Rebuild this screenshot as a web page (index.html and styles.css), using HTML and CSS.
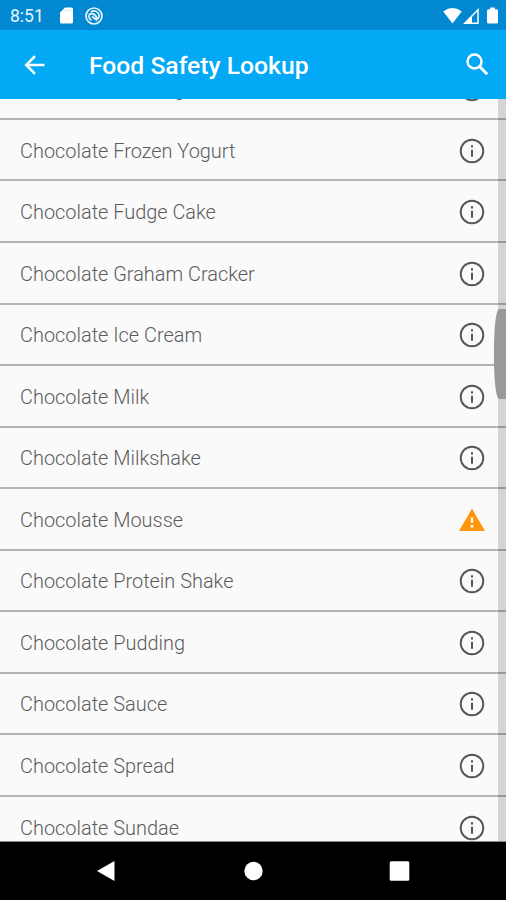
FILE: index.html
```
<!DOCTYPE html>
<html lang="en">
<head>
<meta charset="utf-8">
<title>Food Safety Lookup</title>
<link rel="stylesheet" href="styles.css">
</head>
<body>
<svg class="defs" aria-hidden="true">
  <symbol id="info" viewBox="0 0 26 26">
    <circle cx="13" cy="13" r="11.300" fill="none" stroke="#555" stroke-width="1.900"/>
    <path d="M12 11.700h2v7.100h-2zM12 7.300h2v2.200h-2z" fill="#555"/>
  </symbol>
</svg>
<div class="screen">
  <div class="status">
    <span class="time">8:51</span>
    <svg class="sd" viewBox="0 0 13 17"><path d="M5 0.500h6.500q1.500 0 1.500 1.500v13q0 1.500-1.500 1.500h-10Q0 16.500 0 15V5.500z" fill="#fff"/><path d="M5.300 2.500v2M7.800 2.500v2M10.300 2.500v2" stroke="#b9dcf2" stroke-width="1"/></svg>
    <svg class="sync" viewBox="0 0 18 18" fill="none" stroke="#e4f3fc"><circle cx="9" cy="9" r="8" stroke-width="1.700"/><path d="M6.500 13.300A5 5 0 0 1 4.500 7M6 5A5 5 0 0 1 13 12" stroke-width="1.600"/><path d="M4.500 7.500Q9 4.500 12.500 12M7 9.500l5.500 4" stroke-width="1.900"/></svg>
    <span class="spacer"></span>
    <svg class="wifi" viewBox="0 0 19 16"><path d="M0.300 3.500Q9.500-3.300 18.700 3.500L9.500 15.500z" fill="#fff"/></svg>
    <svg class="signal" viewBox="0 0 16 16"><path d="M1.800 15.200L15 1.800v13.400z" fill="none" stroke="#fff" stroke-width="1.500"/><path d="M1 15.500L9 7.500v8z" fill="#fff"/></svg>
    <svg class="battery" viewBox="0 0 11 17"><path d="M3.200 0.500h4.600v1.700h1.700q1.500 0 1.500 1.500v11.300q0 1.500-1.500 1.500h-8Q0 16.500 0 15V3.700q0-1.500 1.500-1.500h1.700z" fill="#fff"/></svg>
  </div>
  <header class="appbar">
    <svg class="back" viewBox="0 0 22 20" fill="none" stroke="#fff" stroke-width="2.500"><path d="M20.500 10H2.500M11 1.200L2.200 10l8.800 8.800"/></svg>
    <h1>Food Safety Lookup</h1>
    <svg class="search" viewBox="0 0 23 23" fill="none" stroke="#fff"><circle cx="8.500" cy="8.500" r="7" stroke-width="2.500"/><path d="M13.800 13.800l7.400 7.400" stroke-width="3"/></svg>
  </header>
  <main class="content">
    <ul class="list">
      <li><span>Chocolate Frosting</span><svg><use href="#info"/></svg></li>
      <li><span>Chocolate Frozen Yogurt</span><svg><use href="#info"/></svg></li>
      <li><span>Chocolate Fudge Cake</span><svg><use href="#info"/></svg></li>
      <li><span>Chocolate Graham Cracker</span><svg><use href="#info"/></svg></li>
      <li><span>Chocolate Ice Cream</span><svg><use href="#info"/></svg></li>
      <li><span>Chocolate Milk</span><svg><use href="#info"/></svg></li>
      <li><span>Chocolate Milkshake</span><svg><use href="#info"/></svg></li>
      <li><span>Chocolate Mousse</span><svg viewBox="0 0 26 26"><path d="M13 1.500L26 24H0z" fill="#ff980f"/><path d="M11.800 10.500h2.400v5.300h-2.400zM11.800 18h2.400v2.600h-2.400z" fill="#fff"/></svg></li>
      <li><span>Chocolate Protein Shake</span><svg><use href="#info"/></svg></li>
      <li><span>Chocolate Pudding</span><svg><use href="#info"/></svg></li>
      <li><span>Chocolate Sauce</span><svg><use href="#info"/></svg></li>
      <li><span>Chocolate Spread</span><svg><use href="#info"/></svg></li>
      <li><span>Chocolate Sundae</span><svg><use href="#info"/></svg></li>
    </ul>
    <div class="track"></div>
    <div class="thumb"></div>
  </main>
  <nav class="navbar">
    <svg viewBox="0 0 22 22"><path d="M2 11L19.500 1v20z" fill="#fff"/></svg>
    <svg viewBox="0 0 22 22"><circle cx="11.500" cy="11" r="9.200" fill="#fff"/></svg>
    <svg viewBox="0 0 22 22"><rect x="1.700" y="1.200" width="19.600" height="19.600" rx="1.500" fill="#fff"/></svg>
  </nav>
</div>
</body>
</html>
```
FILE: styles.css
```
* { box-sizing: border-box; }
body { margin: 0; font-family: Roboto, "Liberation Sans", sans-serif; }
svg { display: block; flex: none; }
.defs { position: absolute; width: 0; height: 0; }
.screen { display: flex; flex-direction: column; width: 506px; height: 900px; overflow: hidden; background: #fafafa; }

.status { display: flex; align-items: center; flex: none; height: 30px; padding: 1px 8px 0 10px; background: #0288d1; color: #e4f3fc; }
.time { width: 50px; font-size: 17.5px; }
.sd { width: 13px; height: 17px; }
.sync { width: 18px; height: 18px; margin-left: 12px; }
.spacer { flex: 1; }
.wifi { width: 19px; height: 16px; }
.signal { width: 16px; height: 16px; margin-left: 1px; }
.battery { width: 11px; height: 17px; margin-left: 8px; }

.appbar { display: flex; align-items: center; flex: none; height: 69px; padding: 0 17px 0 24px; background: #03a9f4; color: #fff; }
.back { width: 22px; height: 20px; }
.appbar h1 { flex: 1; margin: 3px 0 0 43px; font-size: 24.7px; font-weight: 500; line-height: 30px; white-space: nowrap; }
.search { width: 23px; height: 23px; margin-top: -1px; }

.content { position: relative; flex: none; height: 743px; overflow: hidden; background: #fafafa; border-bottom: 1px solid #888; }
.list { margin: -40.6px 0 0; padding: 0; list-style: none; }
.list li { display: flex; align-items: center; justify-content: space-between; height: 61.54px; padding: 3px 21px 0 20px; border-bottom: 2px solid #b4b4b4; color: #5c5c5c; font-size: 19.93px; font-weight: 300; white-space: nowrap; }
.list svg { width: 26px; height: 26px; margin-top: -1px; }
.track { position: absolute; top: 0; right: 0; width: 8px; height: 100%; background: rgba(0, 0, 0, .15); }
.thumb { position: absolute; top: 210px; right: 0; width: 12px; height: 90px; background: #999; border-radius: 5px 0 0 5px / 40px 0 0 40px; }

.navbar { display: flex; align-items: center; justify-content: space-between; flex: 1; padding: 0 96px 0 95px; background: #000; }
.navbar svg { width: 22px; height: 22px; }
```
